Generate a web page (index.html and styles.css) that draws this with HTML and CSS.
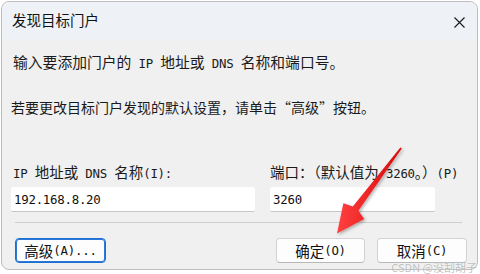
FILE: index.html
```html
<!DOCTYPE html>
<html lang="zh-CN">
<head>
<meta charset="utf-8">
<title>发现目标门户</title>
<link rel="stylesheet" href="styles.css">
</head>
<body>
<div class="window">
  <div class="titlebar">
    <span class="title">发现目标门户</span>
    <svg class="close" width="11" height="11" viewBox="0 0 11 11"><path d="M0.5 0.5L10.5 10.5M10.5 0.5L0.5 10.5" stroke="#1a1a1a" stroke-width="1.1" fill="none"/></svg>
  </div>
  <div class="body">
    <p class="intro">输入要添加门户的<span class="lat"> IP </span>地址或<span class="lat"> DNS </span>名称和端口号。</p>
    <p class="hint">若要更改目标门户发现的默认设置，请单击“高级”按钮。</p>
    <div class="fields">
      <label class="field">
        <span class="label first"><span class="lat">IP </span>地址或<span class="lat"> DNS </span>名称<span class="lat">(I):</span></span>
        <span class="input"><span class="lat">192.168.8.20</span></span>
      </label>
      <label class="field">
        <span class="label">端口：（默认值为<span class="lat"> 3260</span>。）<span class="lat">(P)</span></span>
        <span class="input"><span class="lat">3260</span></span>
      </label>
    </div>
    <div class="sep"></div>
    <div class="buttons">
      <button class="btn btn-adv focus">高级<span class="lat">(A)...</span></button>
      <span class="spacer"></span>
      <button class="btn btn-ok">确定<span class="lat">(O)</span></button>
      <button class="btn btn-cancel">取消<span class="lat">(C)</span></button>
    </div>
  </div>
</div>
<svg class="arrow" width="480" height="274" viewBox="0 0 480 274">
  <defs>
    <linearGradient id="rg" x1="0" y1="0" x2="1" y2="0">
      <stop offset="0" stop-color="#ff4040"/>
      <stop offset="1" stop-color="#d80808"/>
    </linearGradient>
    <filter id="sh" x="-20%" y="-20%" width="140%" height="140%">
      <feDropShadow dx="1.5" dy="1.5" stdDeviation="1.5" flood-color="#000" flood-opacity="0.3"/>
    </filter>
  </defs>
  <polygon points="400.4,147.4 401.8,148.6 358.4,210.8 364.2,218.9 337,233.5 343.4,203.3 352.8,206.6" fill="url(#rg)" filter="url(#sh)"/>
</svg>
<div class="watermark">CSDN @没刮胡子</div>
</body>
</html>
```

FILE: styles.css
```css
* { box-sizing: border-box; }
html, body { margin: 0; padding: 0; background: #ffffff; }
body {
  width: 480px;
  height: 274px;
  overflow: hidden;
  position: relative;
  font-family: "Noto Sans CJK SC", "Noto Sans", sans-serif;
  color: #1a1a1a;
}
.window {
  margin: 1px 0 0 1px;
  width: 477px;
  height: 269px;
  border: 1px solid #bdbdbd;
  border-radius: 8px;
  overflow: hidden;
  display: flex;
  flex-direction: column;
  background: #f0f0f0;
}
.titlebar {
  height: 38px;
  flex: none;
  background: #eef1f6;
  display: flex;
  align-items: center;
  justify-content: space-between;
  padding: 0 12px 0 10px;
}
.title {
  font-size: 14.5px;
  line-height: 20px;
  margin-top: -2px;
  color: #111;
}
.close { display: block; margin-top: 2px; }
.lat {
  font-family: "DejaVu Sans Mono", monospace;
  font-size: 12.4px;
  letter-spacing: -0.25px;
}
.body {
  flex: 1;
  padding: 0 10px 0 9px;
  display: flex;
  flex-direction: column;
}
.intro {
  margin: 14px 0 0 2px;
  font-size: 14.8px;
  line-height: 16px;
  height: 16px;
  white-space: nowrap;
}
.hint {
  margin: 27px 0 0 0;
  font-size: 14px;
  line-height: 20px;
  height: 20px;
  white-space: nowrap;
}
.fields {
  margin-top: 47px;
  display: grid;
  grid-template-columns: 244px 165px;
  column-gap: 15px;
}
.field {
  display: flex;
  flex-direction: column;
  gap: 7px;
}
.label {
  font-size: 14.5px;
  line-height: 16px;
  height: 16px;
  white-space: nowrap;
}
.label.first { padding-left: 2px; }
.input {
  height: 25px;
  background: #ffffff;
  border-bottom: 1px solid #c6c6c6;
  border-radius: 2px;
  padding-left: 3px;
  display: flex;
  align-items: center;
  color: #111;
}
.sep {
  margin: 10px 0 0 4px;
  width: 447px;
  height: 1px;
  background: #cfcfcf;
}
.buttons {
  margin-top: 15px;
  display: flex;
  align-items: center;
  gap: 12px;
}
.spacer { flex: 1; }
.btn {
  height: 25px;
  padding: 0;
  background: #fdfdfd;
  border: 1px solid #d2d2d2;
  border-bottom-color: #b8b8b8;
  border-radius: 4px;
  font-family: "Noto Sans CJK SC", sans-serif;
  font-size: 14.5px;
  line-height: 14px;
  color: #111;
  display: flex;
  align-items: center;
  justify-content: center;
}
.btn .lat { line-height: 14px; }
.btn-adv { width: 91px; margin-left: 4px; }
.btn-ok { width: 89px; }
.btn-cancel { width: 90px; }
.btn.focus {
  border: 1px solid #1a6fd0;
  box-shadow: inset 0 0 0 1px #2b78d6;
}
.arrow {
  position: absolute;
  left: 0;
  top: 0;
  pointer-events: none;
}
.watermark {
  position: absolute;
  right: 3px;
  bottom: 1px;
  font-size: 11px;
  line-height: 12px;
  color: rgba(140, 140, 140, 0.55);
  text-shadow: 0 0 1px rgba(255,255,255,0.8);
  white-space: nowrap;
}
```
